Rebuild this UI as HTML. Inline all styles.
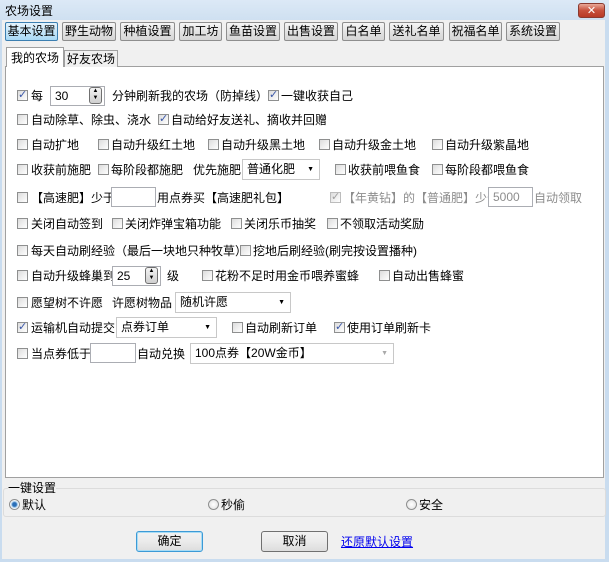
<!DOCTYPE html><html><head><meta charset="utf-8"><style>
*{margin:0;padding:0;box-sizing:border-box}
body{width:609px;height:562px;overflow:hidden;background:#c9dcef;font:12px "Liberation Sans","Noto Sans CJK SC",sans-serif;color:#000;position:relative}
.a{position:absolute;white-space:nowrap;line-height:14px}
#title{position:absolute;left:0;top:0;width:609px;height:20px;background:linear-gradient(#dce9f6,#cfe0f1)}
#body{position:absolute;left:2px;top:20px;width:603px;height:539px;background:#f0f0f0}
#close{position:absolute;left:578px;top:3px;width:27px;height:15px;border:1px solid #8a3a30;border-radius:3px;background:linear-gradient(#e9a898,#c7503c 50%,#b83a26);color:#fff;font:bold 11px/13px "DejaVu Sans",sans-serif;text-align:center}
.b{position:absolute;top:22px;height:19px;border:1px solid #8e8e8e;border-radius:2px;background:linear-gradient(#f6f6f6,#e3e3e3 50%,#d6d6d6);text-align:center;line-height:17px}
.b.s{border-color:#3c7fb1;background:linear-gradient(#e4f3fc,#a9d9f5);}
.tab{position:absolute;border:1px solid #a0a0a0;border-bottom:none;background:#f0f0f0;text-align:center;line-height:16px}
#panel{position:absolute;left:5px;top:66px;width:599px;height:412px;background:#fff;border:1px solid #a0a0a0}
.c{position:absolute;width:11px;height:11px;border:1px solid #8e8f8f;background:linear-gradient(135deg,#dcdcdc,#fff);}
.c.k::after{content:"✓";position:absolute;left:0;top:-3px;font:bold 11px "DejaVu Sans",sans-serif;color:#3a57a8}
.c.d{border-color:#bcbcbc}.c.d::after{color:#a0a0a0}
.in{position:absolute;height:20px;border:1px solid #abadb3;background:#fff;padding-left:4px;line-height:18px}
.sp{position:absolute;width:13px;height:17px;border:1px solid #707070;border-radius:3px;background:linear-gradient(#f3f3f3,#cfcfcf);font-size:6px;line-height:7px;text-align:center}
.sel{position:absolute;height:21px;border:1px solid #c8c8c8;background:#fff;padding-left:4px;line-height:19px}
.sel::after{content:"▼";position:absolute;right:5px;top:0;font-size:7px;color:#000}
.sel.g::after{color:#aaa}
.r{position:absolute;width:11px;height:11px;border-radius:50%;border:1px solid #8e8f8f;background:radial-gradient(#fff,#ddd)}
.r.k{background:radial-gradient(#2a6fb8 30%,#9fc6e8 45%,#fff 65%)}
.btn{position:absolute;top:531px;height:21px;border:1px solid #707070;border-radius:3px;background:linear-gradient(#f2f2f2,#ebebeb 50%,#dddddd);text-align:center;line-height:19px}
.gr{color:#8d8d8d}
</style></head><body>
<div id="title"></div>
<div class="a" style="left:5px;top:4px">农场设置</div>
<div id="close">✕</div>
<div id="body"></div>
<div class="b s" style="left:5px;width:53px">基本设置</div>
<div class="b" style="left:62px;width:54px">野生动物</div>
<div class="b" style="left:120px;width:55px">种植设置</div>
<div class="b" style="left:179px;width:43px">加工坊</div>
<div class="b" style="left:226px;width:54px">鱼苗设置</div>
<div class="b" style="left:284px;width:54px">出售设置</div>
<div class="b" style="left:342px;width:43px">白名单</div>
<div class="b" style="left:389px;width:55px">送礼名单</div>
<div class="b" style="left:449px;width:53px">祝福名单</div>
<div class="b" style="left:506px;width:54px">系统设置</div>
<div id="panel"></div>
<div class="tab" style="left:64px;top:50px;width:54px;height:17px">好友农场</div>
<div class="tab" style="left:6px;top:47px;width:58px;height:20px;background:#fff;line-height:20px;z-index:2">我的农场</div>

<i class="c k" style="left:17px;top:90px"></i><div class="a" style="left:31px;top:89px">每</div>
<div class="in" style="left:50px;top:86px;width:55px">30</div><div class="sp" style="left:89px;top:87px">▲<br>▼</div>
<div class="a" style="left:112px;top:89px">分钟刷新我的农场（防掉线）</div>
<i class="c k" style="left:268px;top:90px"></i><div class="a" style="left:281px;top:89px">一键收获自己</div>

<i class="c" style="left:17px;top:114px"></i><div class="a" style="left:31px;top:113px">自动除草、除虫、浇水</div>
<i class="c k" style="left:158px;top:114px"></i><div class="a" style="left:171px;top:113px">自动给好友送礼、摘收并回赠</div>

<i class="c" style="left:17px;top:139px"></i><div class="a" style="left:31px;top:138px">自动扩地</div>
<i class="c" style="left:98px;top:139px"></i><div class="a" style="left:111px;top:138px">自动升级红土地</div>
<i class="c" style="left:208px;top:139px"></i><div class="a" style="left:221px;top:138px">自动升级黑土地</div>
<i class="c" style="left:319px;top:139px"></i><div class="a" style="left:332px;top:138px">自动升级金土地</div>
<i class="c" style="left:432px;top:139px"></i><div class="a" style="left:445px;top:138px">自动升级紫晶地</div>

<i class="c" style="left:17px;top:164px"></i><div class="a" style="left:31px;top:163px">收获前施肥</div>
<i class="c" style="left:98px;top:164px"></i><div class="a" style="left:111px;top:163px">每阶段都施肥</div>
<div class="a" style="left:193px;top:163px">优先施肥</div>
<div class="sel" style="left:242px;top:159px;width:78px">普通化肥</div>
<i class="c" style="left:335px;top:164px"></i><div class="a" style="left:348px;top:163px">收获前喂鱼食</div>
<i class="c" style="left:432px;top:164px"></i><div class="a" style="left:445px;top:163px">每阶段都喂鱼食</div>

<i class="c" style="left:17px;top:192px"></i><div class="a" style="left:31px;top:191px">【高速肥】少于</div>
<div class="in" style="left:111px;top:187px;width:45px"></div>
<div class="a" style="left:157px;top:191px">用点券买【高速肥礼包】</div>
<i class="c k d" style="left:330px;top:192px"></i><div class="a gr" style="left:343px;top:191px">【年黄钻】的【普通肥】少于</div>
<div class="in gr" style="left:488px;top:187px;width:45px">5000</div>
<div class="a gr" style="left:534px;top:191px">自动领取</div>

<i class="c" style="left:17px;top:218px"></i><div class="a" style="left:31px;top:217px">关闭自动签到</div>
<i class="c" style="left:112px;top:218px"></i><div class="a" style="left:125px;top:217px">关闭炸弹宝箱功能</div>
<i class="c" style="left:231px;top:218px"></i><div class="a" style="left:244px;top:217px">关闭乐币抽奖</div>
<i class="c" style="left:327px;top:218px"></i><div class="a" style="left:340px;top:217px">不领取活动奖励</div>

<i class="c" style="left:17px;top:245px"></i><div class="a" style="left:31px;top:244px">每天自动刷经验（最后一块地只种牧草）</div>
<i class="c" style="left:240px;top:245px"></i><div class="a" style="left:253px;top:244px">挖地后刷经验(刷完按设置播种)</div>

<i class="c" style="left:17px;top:270px"></i><div class="a" style="left:31px;top:269px">自动升级蜂巢到</div>
<div class="in" style="left:112px;top:266px;width:49px">25</div><div class="sp" style="left:145px;top:267px">▲<br>▼</div>
<div class="a" style="left:167px;top:269px">级</div>
<i class="c" style="left:202px;top:270px"></i><div class="a" style="left:215px;top:269px">花粉不足时用金币喂养蜜蜂</div>
<i class="c" style="left:379px;top:270px"></i><div class="a" style="left:392px;top:269px">自动出售蜂蜜</div>

<i class="c" style="left:17px;top:297px"></i><div class="a" style="left:31px;top:296px">愿望树不许愿</div>
<div class="a" style="left:112px;top:296px">许愿树物品</div>
<div class="sel" style="left:175px;top:292px;width:116px">随机许愿</div>

<i class="c k" style="left:17px;top:322px"></i><div class="a" style="left:31px;top:321px">运输机自动提交</div>
<div class="sel" style="left:116px;top:317px;width:101px">点券订单</div>
<i class="c" style="left:232px;top:322px"></i><div class="a" style="left:245px;top:321px">自动刷新订单</div>
<i class="c k" style="left:334px;top:322px"></i><div class="a" style="left:347px;top:321px">使用订单刷新卡</div>

<i class="c" style="left:17px;top:348px"></i><div class="a" style="left:31px;top:347px">当点券低于</div>
<div class="in" style="left:90px;top:343px;width:46px"></div>
<div class="a" style="left:137px;top:347px">自动兑换</div>
<div class="sel g" style="left:190px;top:343px;width:204px">100点券【20W金币】</div>

<div style="position:absolute;left:3px;top:488px;width:603px;height:29px;border:1px solid #dcdcdc;border-radius:3px"></div>
<div class="a" style="left:8px;top:481px;background:#f0f0f0">一键设置</div>
<i class="r k" style="left:9px;top:499px"></i><div class="a" style="left:22px;top:498px">默认</div>
<i class="r" style="left:208px;top:499px"></i><div class="a" style="left:221px;top:498px">秒偷</div>
<i class="r" style="left:406px;top:499px"></i><div class="a" style="left:419px;top:498px">安全</div>

<div class="btn" style="left:136px;width:67px;border-color:#3c9ad6;box-shadow:inset 0 0 0 1px #a8dcf5">确定</div>
<div class="btn" style="left:261px;width:67px">取消</div>
<div class="a" style="left:341px;top:535px;color:#0000ee;text-decoration:underline">还原默认设置</div>
</body></html>
